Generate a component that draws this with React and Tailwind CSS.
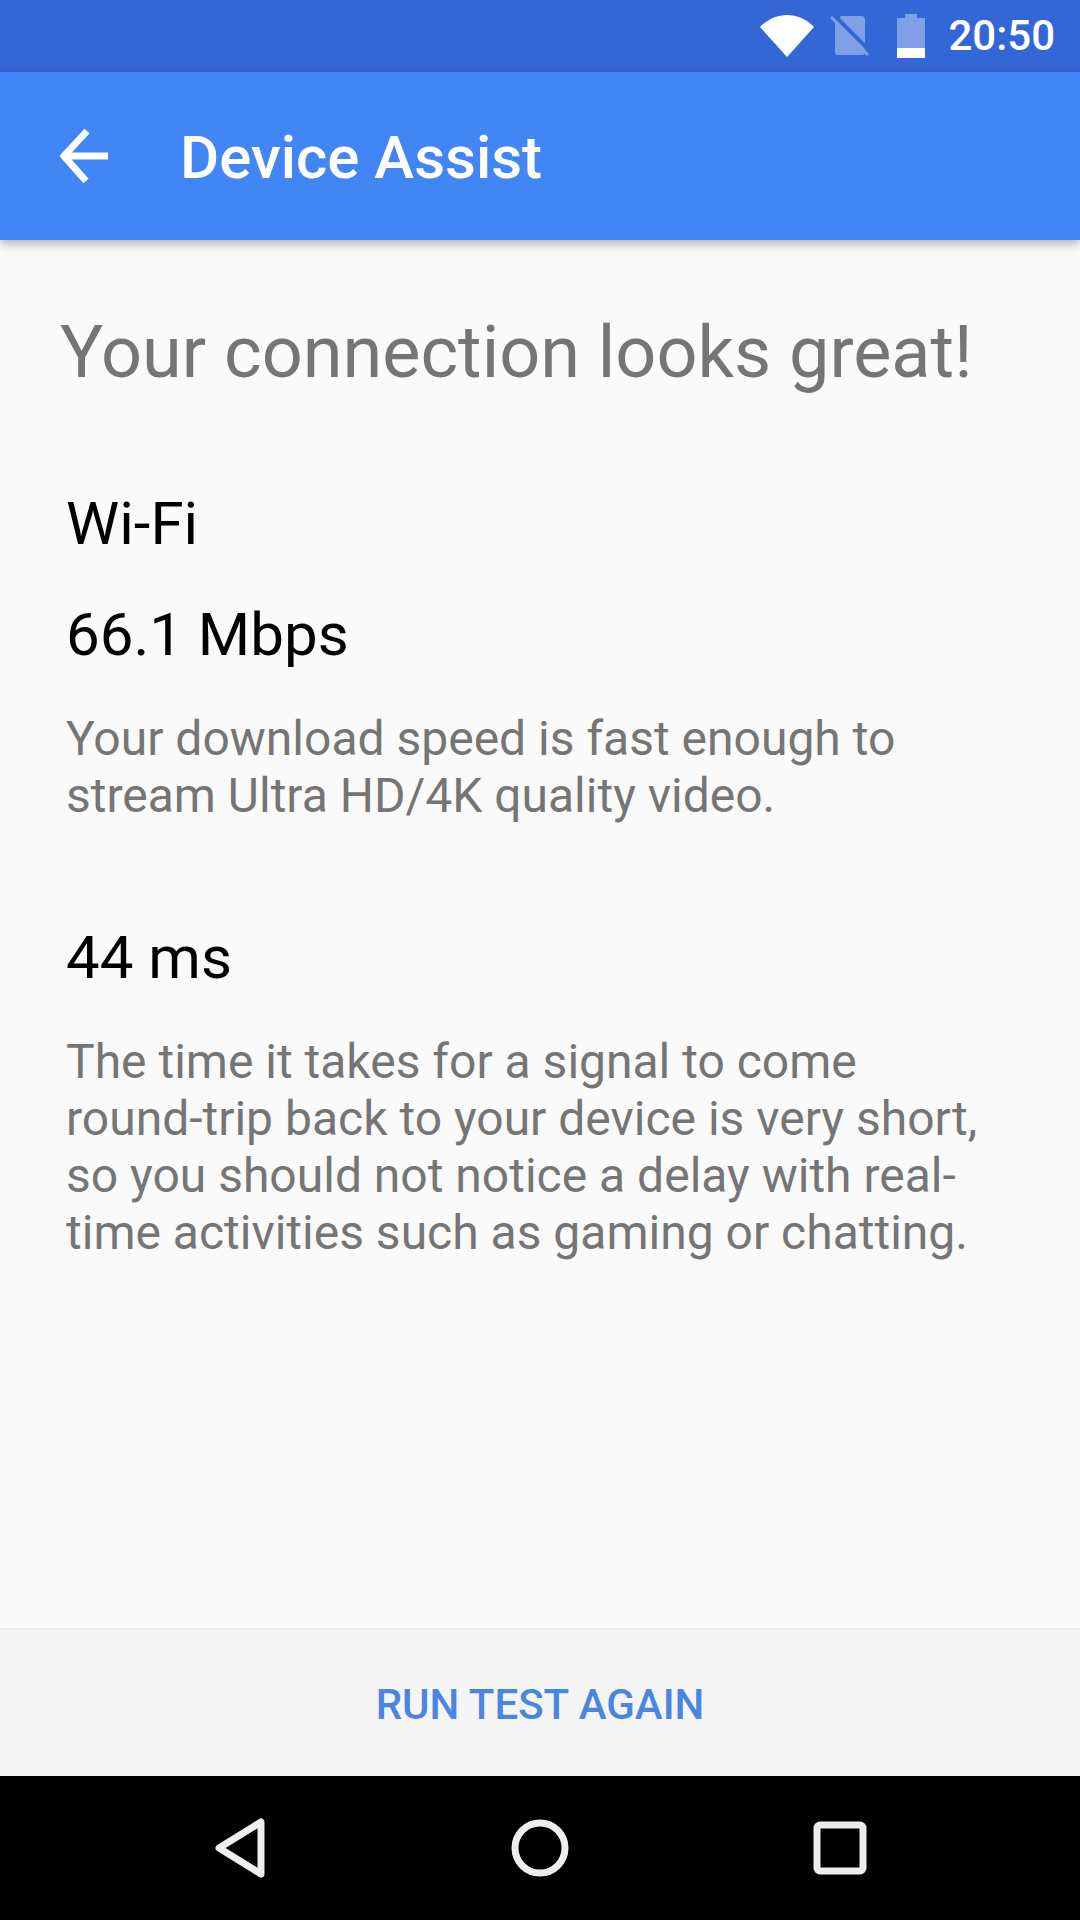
const fontRoboto = "font-['Roboto',sans-serif]";

function StatusBar() {
  return (
    <div className="flex h-[72px] items-center justify-end bg-[#3367d6] pr-[25px]">
      <svg width="54" height="42" viewBox="0 0 54 42" className="mr-[16px]">
        <path d="M0 12 C15 -4 39 -4 54 12 L27 42 Z" fill="#ffffff" />
      </svg>
      <svg width="40" height="42" viewBox="0 0 40 42" className="mr-[26px]">
        <path d="M11 1 H31 Q35 1 35 5 V37 Q35 40 32 40 H8 Q5 40 5 37 V8 Z" fill="#7f9fe6" />
        <path d="M3 -1 L40 36" stroke="#3367d6" strokeWidth="4" />
        <path d="M1 2 L38 40" stroke="#7f9fe6" strokeWidth="3" />
      </svg>
      <svg width="30" height="44" viewBox="0 0 30 44" className="mr-[22px]">
        <path d="M9 0 H21 V4 H29 V44 H1 V4 H9 Z" fill="#7f9fe6" />
        <rect x="1" y="34" width="28" height="10" fill="#ffffff" />
      </svg>
      <span className="text-[42px] leading-none font-medium text-white">20:50</span>
    </div>
  );
}

function NavBar() {
  return (
    <div className="flex h-[144px] items-center justify-between bg-black px-[213px]">
      <svg width="54" height="60" viewBox="0 0 54 60">
        <path d="M48 4 V56 L6 30 Z" fill="none" stroke="#eeeeee" strokeWidth="7" strokeLinejoin="round" />
      </svg>
      <svg width="60" height="60" viewBox="0 0 60 60">
        <circle cx="30" cy="30" r="25" fill="none" stroke="#eeeeee" strokeWidth="7" />
      </svg>
      <svg width="54" height="54" viewBox="0 0 54 54">
        <rect x="4" y="4" width="46" height="46" rx="3" fill="none" stroke="#eeeeee" strokeWidth="7" />
      </svg>
    </div>
  );
}

export default function App() {
  return (
    <div className={`${fontRoboto} flex h-[1920px] w-[1080px] flex-col bg-[#fafafa]`}>
      <StatusBar />

      <header className="z-10 flex h-[168px] items-center bg-[#4285f4] pl-[60px] shadow-[0_4px_10px_rgba(0,0,0,0.3)]">
        <svg width="48" height="56" viewBox="0 0 48 56" fill="none" stroke="#ffffff" strokeWidth="7">
          <path d="M48 28 H5" />
          <path d="M27 3 L4 28 L26 53" />
        </svg>
        <h1 className="ml-[72px] pt-[4px] text-[60px] leading-none font-medium text-white">Device Assist</h1>
      </header>

      <main className="flex-1 pt-[73px]">
        <h2 className="pl-[60px] text-[72px] leading-[80px] text-[#757575]">Your connection looks great!</h2>

        <div className="px-[66px] pt-[98px]">
          <p className="text-[60px] leading-[66px] text-black">Wi-Fi</p>
          <p className="mt-[45px] text-[60px] leading-[66px] text-black">66.1 Mbps</p>
          <p className="mt-[42px] text-[48px] leading-[57px] text-[#757575]">
            Your download speed is fast enough to<br />
            stream Ultra HD/4K quality video.
          </p>

          <p className="mt-[101px] text-[60px] leading-[66px] text-black">44 ms</p>
          <p className="mt-[42px] text-[48px] leading-[57px] text-[#757575]">
            The time it takes for a signal to come<br />
            round-trip back to your device is very short,<br />
            so you should not notice a delay with real-<br />
            time activities such as gaming or chatting.
          </p>
        </div>
      </main>

      <footer className="flex h-[148px] items-center justify-center border-t-2 border-[#eeeeee] bg-[#f5f5f5] pt-[4px]">
        <button type="button" className="text-[42px] leading-none font-medium text-[#4a86e0]">
          RUN TEST AGAIN
        </button>
      </footer>

      <NavBar />
    </div>
  );
}
